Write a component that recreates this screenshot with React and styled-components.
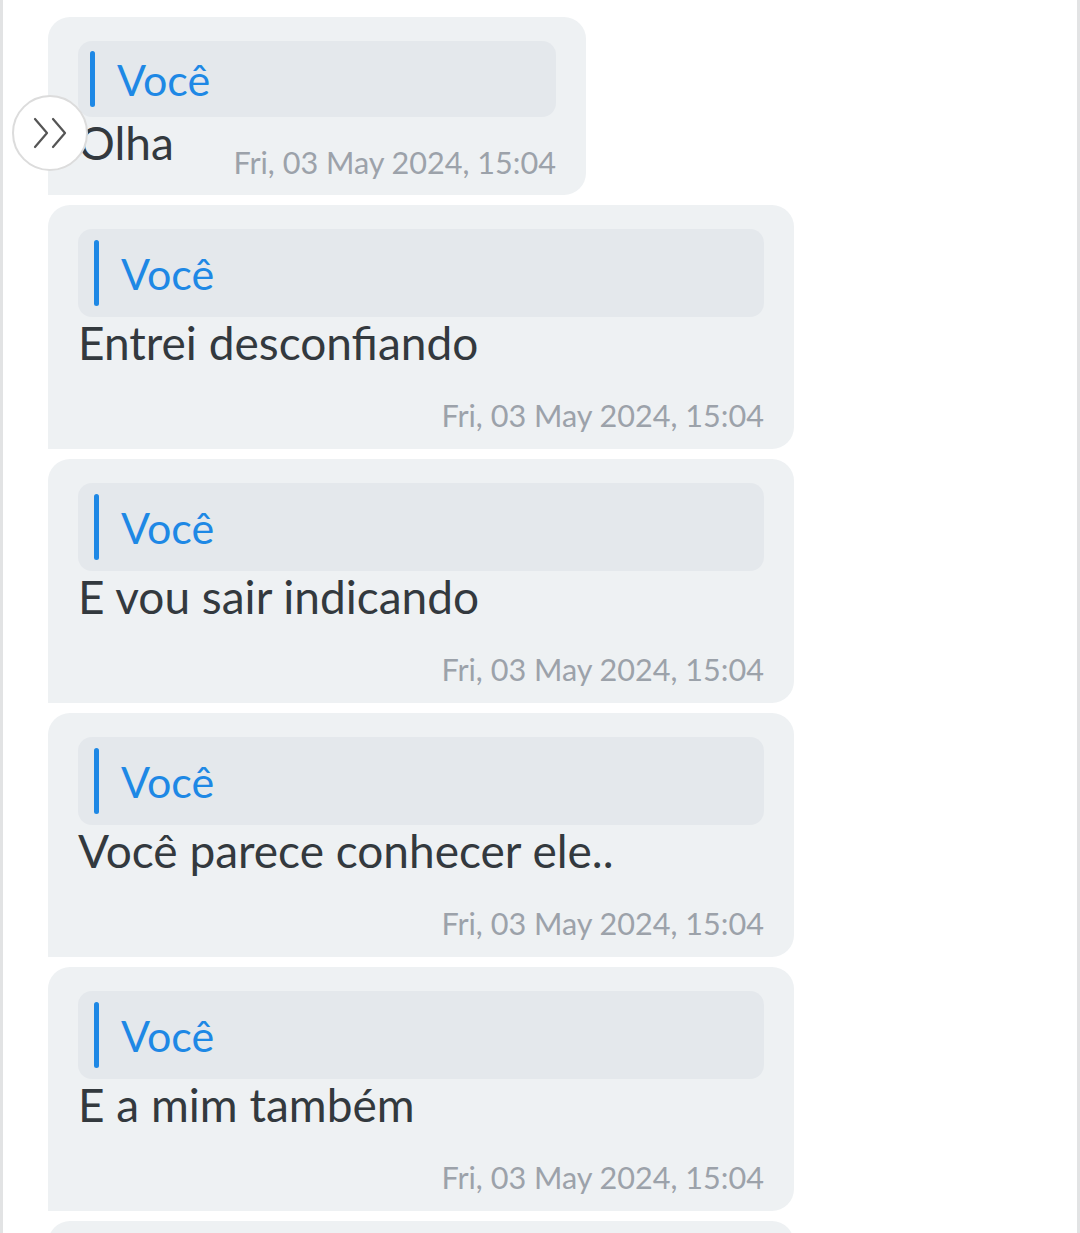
import React from 'react';
import styled, { createGlobalStyle } from 'styled-components';

const GlobalStyle = createGlobalStyle`
  html, body {
    margin: 0;
    padding: 0;
    background: #ffffff;
  }
  body {
    font-family: Lato, "Open Sans", "Noto Sans", sans-serif;
    height: 1233px;
    overflow: hidden;
  }
`;

const messages = [
  'Entrei desconfiando',
  'E vou sair indicando',
  'Você parece conhecer ele..',
  'E a mim também',
];

const STAMP = 'Fri, 03 May 2024, 15:04';

function App() {
  return (
    <ChatContainer>
      <GlobalStyle />
      <List>
        {/* first one is short: text and time share a row */}
        <Bubble compact>
          <Quote compact>
            <QuoteBar compact />
            <QuoteName>Você</QuoteName>
          </Quote>
          <InlineRow>
            <Text>Olha</Text>
            <Stamp inline>{STAMP}</Stamp>
          </InlineRow>
          <ScrollButton>
            <svg width="36" height="32" viewBox="0 0 36 32" fill="none">
              <path d="M3 2 L15 16 L3 30" stroke="#555" strokeWidth="2.2" strokeLinecap="round" strokeLinejoin="round" />
              <path d="M21 2 L33 16 L21 30" stroke="#555" strokeWidth="2.2" strokeLinecap="round" strokeLinejoin="round" />
            </svg>
          </ScrollButton>
        </Bubble>
        {messages.map((msg, i) => (
          <Bubble key={i}>
            <Quote>
              <QuoteBar />
              <QuoteName>Você</QuoteName>
            </Quote>
            <Text>{msg}</Text>
            <StampRow>
              <Stamp>{STAMP}</Stamp>
            </StampRow>
          </Bubble>
        ))}
        {/* next message, only its top edge is in view */}
        <Bubble />
      </List>
    </ChatContainer>
  );
}

export default App;

const ChatContainer = styled.div`
  height: 1233px;
  box-sizing: border-box;
  border-left: 3px solid #e2e3e4;
  border-right: 3px solid #e2e3e4;
  padding: 17px 0 0 45px;
  overflow: hidden;
`;

const List = styled.div`
  display: flex;
  flex-direction: column;
  align-items: flex-start;
  gap: 10px;
`;

const Bubble = styled.div`
  position: relative;
  box-sizing: border-box;
  width: ${(p) => (p.compact ? '538px' : '746px')};
  min-height: 60px;
  padding: ${(p) => (p.compact ? '24px 30px 14px 30px' : '24px 30px 15px 30px')};
  background: #eef1f3;
  border-radius: 22px 22px 22px 0;
`;

const Quote = styled.div`
  display: flex;
  align-items: center;
  height: ${(p) => (p.compact ? '76px' : '88px')};
  padding-left: ${(p) => (p.compact ? '12px' : '16px')};
  background: #e4e8ec;
  border-radius: 14px;
`;

const QuoteBar = styled.span`
  width: 5px;
  height: ${(p) => (p.compact ? '56px' : '66px')};
  border-radius: 3px;
  background: #1e88e5;
  margin-right: 22px;
`;

const QuoteName = styled.span`
  color: #1e88e5;
  font-size: 43px;
  line-height: 1;
`;

const Text = styled.div`
  color: #33393e;
  font-size: 46px;
  line-height: 52px;
`;

const InlineRow = styled.div`
  display: flex;
  align-items: flex-start;
  justify-content: space-between;
`;

const StampRow = styled.div`
  display: flex;
  justify-content: flex-end;
  margin-top: 29px;
`;

const Stamp = styled.span`
  color: #9ca2aa;
  font-size: 30.6px;
  line-height: 36px;
  margin-top: ${(p) => (p.inline ? '28px' : '0')};
`;

const ScrollButton = styled.button`
  position: absolute;
  left: -36px;
  top: 78px;
  width: 76px;
  height: 76px;
  border-radius: 50%;
  border: 2px solid #dcdcdc;
  background: #ffffff;
  display: flex;
  align-items: center;
  justify-content: center;
  padding: 0;
`;
